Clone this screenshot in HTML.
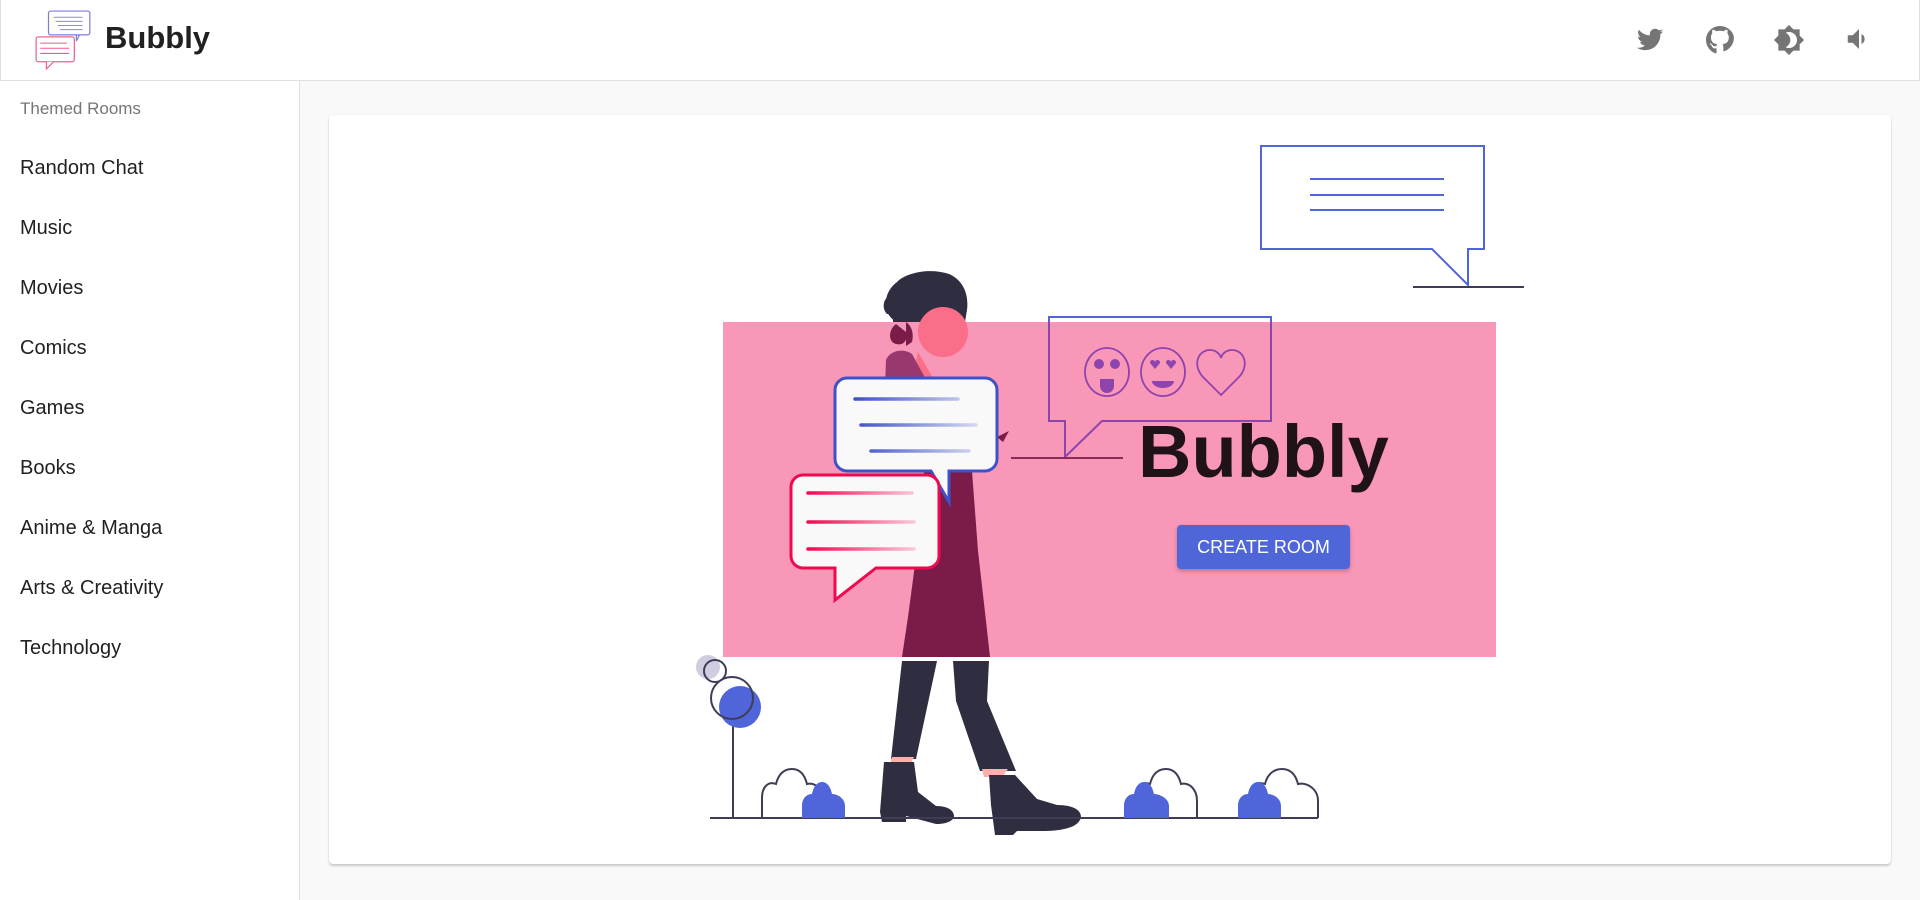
<!DOCTYPE html>
<html><head><meta charset="utf-8"><style>
*{margin:0;padding:0;box-sizing:border-box}
body{width:1920px;height:900px;overflow:hidden;background:#f9f9f9;font-family:"Liberation Sans",Arial,sans-serif;position:relative}
.hdr{position:absolute;left:0;top:0;width:1920px;height:81px;background:#fff;border:1px solid #e0e0e0;border-top:none}
.title{position:absolute;left:104px;top:20px;font-size:31px;font-weight:bold;color:#212121}
.side{position:absolute;left:0;top:81px;width:300px;height:819px;background:#fff;border-right:1px solid #e0e0e0}
.side .h{position:absolute;left:20px;top:18px;font-size:17px;color:#757575}
.side .it{position:absolute;left:20px;font-size:20px;color:#212121}
.card{position:absolute;left:329px;top:115px;width:1562px;height:749px;background:#fff;border-radius:4px;box-shadow:0 2px 2px rgba(0,0,0,.18),0 0 1px rgba(0,0,0,.12)}
.pink{position:absolute;left:723px;top:322px;width:773px;height:335px;background:#f997b8}
.big{position:absolute;left:1138px;top:409px;font-size:74px;font-weight:bold;color:#1f1218}
.btn{position:absolute;left:1177px;top:525px;width:173px;height:44px;background:#4f66d9;border-radius:4px;color:#fff;font-size:18px;line-height:44px;text-align:center;white-space:nowrap;box-shadow:0 2px 4px rgba(0,0,0,.25)}
svg.ill{position:absolute;left:0;top:0}
</style></head><body>
<div class="hdr">
<svg style="position:absolute;left:33px;top:9px" width="60" height="62" viewBox="0 0 58 60">
<rect x="14" y="2" width="40" height="23" rx="2" fill="#fff" stroke="#7d7de0" stroke-width="1.2"/>
<path d="M41 25 v6 l3-6" fill="none" stroke="#7d7de0" stroke-width="1.2"/>
<path d="M19 8h28M21 12h26M23 16h24M25 20h22" stroke="#8a8ae8" stroke-width="1"/>
<rect x="2" y="27" width="37" height="24" rx="2" fill="#fff" stroke="#f06090" stroke-width="1.2"/>
<path d="M12 51 v7 l7-7" fill="#fff" stroke="#f06090" stroke-width="1.2"/>
<path d="M6 33h26M6 38h28M6 43h28" stroke="#f25a8a" stroke-width="1"/>
</svg>
<div class="title">Bubbly</div>
<svg style="position:absolute;left:1634px;top:24px" width="30" height="30" viewBox="0 0 24 24"><path fill="#757575" d="M22.5 5.9c-.8.3-1.6.6-2.5.7.9-.5 1.6-1.4 1.9-2.4-.8.5-1.8.8-2.7 1-.8-.9-1.9-1.4-3.1-1.4-2.4 0-4.300 1.9-4.3 4.3 0 .3 0 .7.1 1-3.6-.2-6.7-1.9-8.8-4.5-.4.6-.6 1.4-.6 2.2 0 1.5.8 2.8 1.9 3.6-.7 0-1.4-.2-1.9-.5v.1c0 2.1 1.5 3.8 3.4 4.2-.4.1-.7.1-1.1.1-.3 0-.5 0-.8-.1.5 1.7 2.1 3 4 3-1.5 1.2-3.3 1.8-5.3 1.8H1.5c1.9 1.2 4.2 1.9 6.6 1.9 7.9 0 12.2-6.5 12.2-12.2v-.6c.9-.6 1.6-1.4 2.2-2.2z"/></svg>
<svg style="position:absolute;left:1703px;top:24px" width="32" height="32" viewBox="0 0 24 24"><path fill="#757575" d="M12 1.5C6.2 1.5 1.5 6.2 1.5 12c0 4.6 3 8.6 7.2 10 .5.1.7-.2.7-.5v-3.3c-2.4.5-3.1-.6-3.4-1.4-.2-.5-.8-1.3-1.3-1.6-.4-.2-.9-.7 0-.7.8 0 1.4.8 1.6 1.1.9 1.6 2.4 1.1 3 .9.1-.7.4-1.1.7-1.4-2.3-.3-4.8-1.2-4.8-5.2 0-1.1.4-2.1 1.1-2.8-.1-.3-.5-1.3.1-2.8 0 0 .9-.3 2.9 1.1.8-.2 1.7-.3 2.6-.3s1.8.1 2.6.3c2-1.4 2.9-1.1 2.9-1.1.6 1.5.2 2.5.1 2.8.7.7 1.1 1.7 1.1 2.8 0 4-2.5 4.9-4.8 5.2.4.3.7 1 .7 1.9v2.9c0 .3.2.6.7.5 4.2-1.4 7.2-5.4 7.2-10C22.5 6.2 17.8 1.5 12 1.5z"/></svg>
<svg style="position:absolute;left:1772px;top:24px" width="32" height="32" viewBox="0 0 24 24"><path fill="#757575" d="M20 8.7V4h-4.7L12 .7 8.7 4H4v4.7L.7 12 4 15.3V20h4.7l3.3 3.3 3.3-3.3H20v-4.7l3.3-3.3L20 8.7zM12 18c-.9 0-1.8-.2-2.5-.6 2-1 3.5-3.100 3.5-5.4s-1.5-4.4-3.5-5.4c.7-.4 1.6-.6 2.5-.6 3.3 0 6 2.7 6 6s-2.7 6-6 6z"/></svg>
<svg style="position:absolute;left:1843px;top:24px" width="30" height="30" viewBox="0 0 24 24"><path fill="#757575" d="M3 9v6h4l5 5V4L7 9H3zm13.5 3c0-1.8-1-3.3-2.5-4v8c1.5-.7 2.5-2.2 2.5-4z"/></svg>
</div>
<div class="side">
<div class="h">Themed Rooms</div>
<div class="it" style="top:76px">Random Chat</div>
<div class="it" style="top:136px">Music</div>
<div class="it" style="top:196px">Movies</div>
<div class="it" style="top:256px">Comics</div>
<div class="it" style="top:316px">Games</div>
<div class="it" style="top:376px">Books</div>
<div class="it" style="top:436px">Anime &amp; Manga</div>
<div class="it" style="top:496px">Arts &amp; Creativity</div>
<div class="it" style="top:556px">Technology</div>
</div>
<div class="card"></div>
<div class="pink"></div>
<svg class="ill" width="1920" height="900" viewBox="0 0 1920 900">
<defs><linearGradient id="gb" x1="0" x2="1"><stop offset="0" stop-color="#3f51c9"/><stop offset="1" stop-color="#3f51c9" stop-opacity=".2"/></linearGradient>
<linearGradient id="gr" x1="0" x2="1"><stop offset="0" stop-color="#f0094f"/><stop offset="1" stop-color="#f0094f" stop-opacity=".2"/></linearGradient></defs>
<!-- top bubble -->
<path d="M1261 146H1484V249H1468V285L1432 249H1261Z" fill="none" stroke="#4f65d9" stroke-width="2"/>
<path d="M1310 179H1444M1310 195H1444M1310 210H1444" stroke="#4f65d9" stroke-width="2"/>
<path d="M1413 287H1524" stroke="#3f3d56" stroke-width="2"/>
<!-- emoji bubble -->
<path d="M1049 322V421H1065V457L1102 421H1271V322" fill="none" stroke="#8e44ad" stroke-width="2"/>
<path d="M1049 322V317H1271V322" fill="none" stroke="#4f65d9" stroke-width="2"/>
<path d="M1011 458H1123" stroke="#8a2a5a" stroke-width="2"/>
<g fill="none" stroke="#8e44ad" stroke-width="1.8">
<ellipse cx="1107" cy="372" rx="22" ry="24"/><ellipse cx="1163" cy="372" rx="22" ry="24"/>
<path d="M1221 395 L1203 377 C1192 365 1198 350 1210 350 C1216 350 1220 354 1221 358 C1222 354 1226 350 1232 350 C1244 350 1250 365 1239 377Z"/>
</g>
<g fill="#8e44ad"><circle cx="1099" cy="364" r="5"/><circle cx="1115" cy="364" r="5"/><path d="M1100 379h14v7a7 7 0 0 1-14 0z"/>
<path d="M1150 363l5 6 5-6a2.5 2.5 0 0 0-5-1 2.5 2.5 0 0 0-5 1zM1166 363l5 6 5-6a2.5 2.5 0 0 0-5-1 2.5 2.5 0 0 0-5 1z"/><path d="M1152 381h22a11 7 0 0 1-22 0z"/></g>
<!-- person -->
<path d="M897 282c10-10 34-14 52-8 14 6 20 20 18 36l-2 12h-68c-14-6-16-28 0-40z" fill="#2f2e41"/>
<path d="M885 300c6-8 18-10 24-6l-6 20h-16c-4-4-4-10-2-14z" fill="#2f2e41"/>
<rect x="893" y="315" width="70" height="7" fill="#2f2e41"/>
<circle cx="943" cy="332" r="25" fill="#fa6e8a"/>
<path d="M896 324c-8 6-8 18 0 20 8 2 12-4 10-12z" fill="#7b1c48"/>
<path d="M906 322c6 4 8 12 6 20l-6 4z" fill="#7b1c48"/>
<path d="M918 352l-4 20 20 8z" fill="#fa6e8a"/>
<path d="M886 360c4-10 18-12 26-6l22 40-50 20z" fill="#99376f"/>
<path d="M930 471h42l6 80 8 70 4 36h-88l6-40 12-90 4-56z" fill="#7b1c48"/>
<path d="M902 661h35l-21 98h-25z" fill="#2f2e41"/>
<path d="M953 661h36l-2 40 29 70h-36l-24-70z" fill="#2f2e41"/>
<path d="M892 757h22l-4 8h-20z" fill="#fdb0ab"/>
<path d="M982 769h26l-6 8h-18z" fill="#fdb0ab"/>
<path d="M884 762h30l4 30 18 14c14 0 18 6 18 10s-6 8-18 8l-30-8v6h-24l-2-10z" fill="#2f2e41"/>
<path d="M989 775h26l22 24 20 6c18 0 24 6 24 12-2 12-24 14-38 14h-26l-4 4h-18l-4-30z" fill="#2f2e41"/>
<path d="M997 437l12-6-6 11z" fill="#7b1c48"/>
<!-- blue bubble -->
<path d="M847 378H985a12 12 0 0 1 12 12V459a12 12 0 0 1-12 12H949V502L931 471H847a12 12 0 0 1-12-12V390a12 12 0 0 1 12-12z" fill="#f9f9f9" stroke="#3f51c9" stroke-width="3"/>
<path d="M855 399H958M861 425H976M871 451H969" stroke="url(#gb)" stroke-width="3.5" stroke-linecap="round"/>
<!-- red bubble -->
<path d="M803 475H927a12 12 0 0 1 12 12V556a12 12 0 0 1-12 12H876L835 600V568H803a12 12 0 0 1-12-12V487a12 12 0 0 1 12-12z" fill="#f9f9f9" stroke="#f0094f" stroke-width="3"/>
<path d="M808 493H912M808 522H914M808 549H914" stroke="url(#gr)" stroke-width="3.5" stroke-linecap="round"/>
<!-- ground -->
<path d="M710 818H1318" stroke="#3f3d56" stroke-width="2"/>
<path d="M733 818V722" stroke="#3f3d56" stroke-width="2"/>
<circle cx="708" cy="667" r="12" fill="#d0cde1"/>
<circle cx="740" cy="707" r="21" fill="#4f65d9"/>
<circle cx="715" cy="671" r="11" fill="none" stroke="#3f3d56" stroke-width="2"/>
<circle cx="732" cy="698" r="21" fill="none" stroke="#3f3d56" stroke-width="2"/>
<g fill="none" stroke="#3f3d56" stroke-width="2">
<path d="M762 818v-20c0-12 7-17 14-14 3-12 10-15 16-15s12 3 15 15c8-2 16 5 16 17v17"/>
<path d="M1136 818v-20c0-12 7-17 14-14 3-12 10-15 16-15s12 3 15 15c8-2 16 5 16 17v17"/>
<path d="M1249 818v-20c0-12 8-17 16-14 3-12 11-15 17-15s13 3 16 15c9-2 20 5 20 17v17"/>
</g>
<g fill="#4f65d9">
<path d="M802 818v-12c0-8 5-12 10-12 2-10 7-12 10-12s8 2 10 12c5 0 13 4 13 12v12z"/>
<path d="M1124 818v-12c0-8 5-12 10-12 2-10 7-12 10-12s8 2 10 12c5 0 15 4 15 12v12z"/>
<path d="M1238 818v-12c0-8 5-12 10-12 2-10 7-12 10-12s8 2 10 12c5 0 13 4 13 12v12z"/>
</g>
</svg>
<div class="big">Bubbly</div>
<div class="btn">CREATE ROOM</div>
</body></html>
